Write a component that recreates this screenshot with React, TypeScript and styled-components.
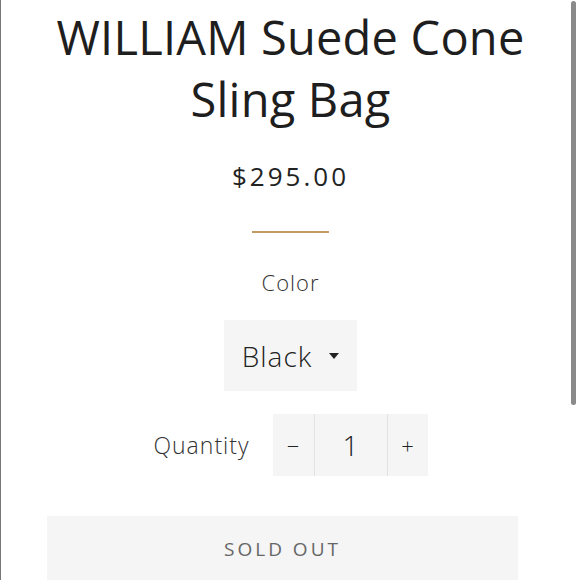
import styled, { createGlobalStyle } from "styled-components";

const GlobalStyle = createGlobalStyle`
  html, body {
    margin: 0;
    padding: 0;
    background: #fff;
    overflow: hidden;
  }
  body {
    font-family: "Open Sans", "Liberation Sans", sans-serif;
    color: #222;
  }
`;

const Frame = styled.div`
  position: relative;
  width: 580px;
  height: 580px;
  overflow: hidden;
  box-sizing: border-box;
  border-left: 1px solid #777;
`;

/* fake scrollbar thumb drawn over the page */
const ScrollThumb = styled.div`
  position: absolute;
  right: 4px;
  top: 1px;
  width: 5px;
  height: 404px;
  border-radius: 3px;
  background: #8a8a8a;
`;

const Product = styled.div`
  display: flex;
  flex-direction: column;
  align-items: center;
  padding-top: 6px;
  width: 579px;
`;

const Title = styled.h1`
  margin: 0;
  font-size: 47px;
  font-weight: 400;
  line-height: 62px;
  text-align: center;
  color: #1e1e1e;
  letter-spacing: 0.2px;
`;

const Price = styled.div`
  margin-top: 28px;
  font-size: 26px;
  letter-spacing: 3px;
  color: #222;
`;

const Divider = styled.hr`
  margin: 37px 0 0;
  width: 77px;
  border: 0;
  height: 2px;
  background: #c49a62;
`;

const OptionLabel = styled.label`
  margin-top: 34px;
  font-size: 22px;
  font-weight: 300;
  letter-spacing: 1px;
  color: #333;
`;

const SelectBox = styled.div`
  margin-top: 23px;
  display: flex;
  align-items: center;
  gap: 17px;
  height: 71px;
  padding: 0 18px;
  box-sizing: border-box;
  background: #f5f5f5;
  font-size: 28px;
  font-weight: 300;
  letter-spacing: 1px;
  color: #222;
`;

const Caret = styled.span`
  width: 0;
  height: 0;
  border-left: 5px solid transparent;
  border-right: 5px solid transparent;
  border-top: 6px solid #222;
`;

const QuantityRow = styled.div`
  margin-top: 23px;
  display: flex;
  align-items: center;
  gap: 23px;
`;

const QuantityLabel = styled.span`
  font-size: 23px;
  font-weight: 300;
  letter-spacing: 1px;
  color: #333;
`;

const Stepper = styled.div`
  display: flex;
  height: 62px;
  background: #f5f5f5;
`;

const StepCell = styled.div<{ $w: number; $divider?: boolean }>`
  width: ${(p) => p.$w}px;
  display: flex;
  align-items: center;
  justify-content: center;
  box-sizing: border-box;
  border-left: ${(p) => (p.$divider ? "1px solid #e2e2e2" : "none")};
  font-size: ${(p) => (p.$w > 50 ? 28 : 22)}px;
  font-weight: 300;
  color: #222;
`;

const SoldOut = styled.button`
  margin-top: 40px;
  align-self: flex-start;
  margin-left: 46px;
  width: 471px;
  height: 66px;
  border: 0;
  background: #f5f5f5;
  font-family: "Open Sans", "Liberation Sans", sans-serif;
  font-size: 19px;
  letter-spacing: 3px;
  color: #666;
  padding-bottom: 2px;
`;

export default function App() {
  return (
    <>
      <GlobalStyle />
      <Frame>
        <Product>
          <Title>
            WILLIAM Suede Cone
            <br />
            Sling Bag
          </Title>
          <Price>$295.00</Price>
          <Divider />
          <OptionLabel>Color</OptionLabel>
          <SelectBox>
            Black
            <Caret />
          </SelectBox>
          <QuantityRow>
            <QuantityLabel>Quantity</QuantityLabel>
            <Stepper>
              <StepCell $w={41}>−</StepCell>
              <StepCell $w={73} $divider>
                1
              </StepCell>
              <StepCell $w={41} $divider>
                +
              </StepCell>
            </Stepper>
          </QuantityRow>
          <SoldOut>SOLD OUT</SoldOut>
        </Product>
        <ScrollThumb />
      </Frame>
    </>
  );
}
